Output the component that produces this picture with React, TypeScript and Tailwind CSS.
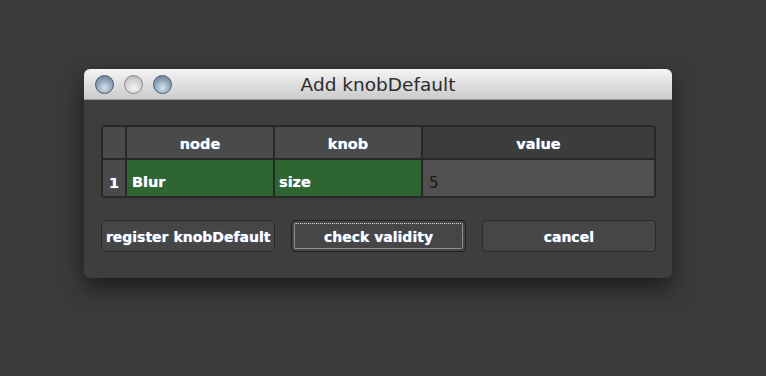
const font = "font-['Lucida_Grande','DejaVu_Sans',sans-serif]";

function Light({ gray }: { gray?: boolean }) {
  return (
    <div
      className={
        "w-[19px] h-[19px] rounded-full border " +
        (gray
          ? "border-[#8a8a8a] bg-[radial-gradient(circle_at_50%_70%,#f4f4f4_0%,#d2d2d2_55%,#a9a9a9_100%)]"
          : "border-[#4f5d6b] bg-[radial-gradient(circle_at_50%_70%,#d6e2ee_0%,#93a8bd_50%,#5d7185_100%)]")
      }
    />
  );
}

function Btn({ label, focused }: { label: string; focused?: boolean }) {
  return (
    <button
      className={
        "flex-1 h-[32px] rounded-[4px] border bg-[#464646] text-[14px] font-semibold text-white whitespace-nowrap [text-shadow:0_0_1px_#9fc0ff] p-[2px] " +
        (focused ? "border-[#1e1e1e]" : "border-[#2b2b2b]")
      }
    >
      <div
        className={
          "w-full h-full flex items-center justify-center rounded-[2px] pt-[2px] " +
          (focused ? "border border-dotted border-[#d8d8d8]" : "")
        }
      >
        {label}
      </div>
    </button>
  );
}

export default function App() {
  return (
    <div className={`w-[766px] h-[376px] bg-[#3b3b3b] pt-[69px] pl-[84px] ${font}`}>
      <div className="w-[588px] h-[209px] rounded-[6px] overflow-hidden bg-[#3e3e3e] shadow-[0_10px_24px_rgba(0,0,0,0.55)] flex flex-col">
        <div className="h-[31px] shrink-0 relative flex items-center bg-gradient-to-b from-[#f4f4f4] to-[#cbcbcb] border-b border-[#9a9a9a]">
          <div className="flex gap-[10px] pl-[11px] pt-[1px]">
            <Light />
            <Light gray />
            <Light />
          </div>
          <div className="absolute inset-0 flex items-center justify-center text-[18.5px] text-[#2c2c2c] pt-[2px]">
            Add knobDefault
          </div>
        </div>
        <div className="px-[17px] pt-[25px]">
          <div className="w-[555px] rounded-[4px] bg-[#282828] p-[2px] grid grid-cols-[22px_146px_146px_1fr] grid-rows-[31px_36px] gap-[2px] text-[14.5px] font-semibold text-white [text-shadow:0_0_1px_#9fc0ff]">
            <div className="bg-[#4a4a4a]" />
            <div className="bg-[#4a4a4a] flex items-center justify-center pt-[4px]">node</div>
            <div className="bg-[#4a4a4a] flex items-center justify-center pt-[4px]">knob</div>
            <div className="bg-[#3c3c3c] flex items-center justify-center font-bold pt-[4px]">value</div>
            <div className="bg-[#4a4a4a] flex items-center justify-center pt-[12px]">1</div>
            <div className="bg-[#2e6530] flex items-center pl-[5px] pt-[10px]">Blur</div>
            <div className="bg-[#2e6530] flex items-center pl-[4px] pt-[10px]">size</div>
            <div className="bg-[#505050] flex items-end pl-[6px] pb-[2px] text-[15px] text-[#1a1a1a] font-medium [text-shadow:none]">5</div>
          </div>
          <div className="flex gap-[16px] mt-[22px] w-[555px]">
            <Btn label="register knobDefault" />
            <Btn label="check validity" focused />
            <Btn label="cancel" />
          </div>
        </div>
      </div>
    </div>
  );
}
